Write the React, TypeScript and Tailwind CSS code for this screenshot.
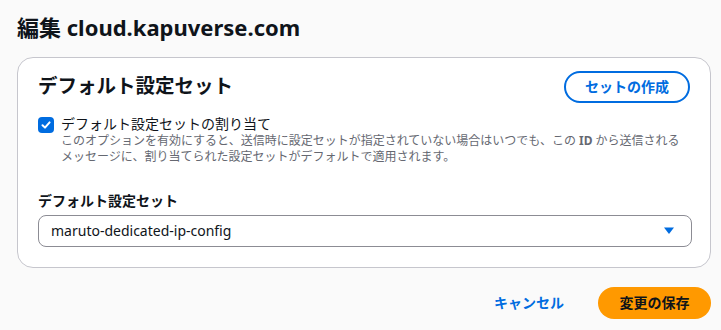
import React from "react";

export default function App() {
  const font = { fontFamily: '"Noto Sans", "Noto Sans CJK JP", sans-serif' };
  return (
    <div className="w-[721px] h-[330px] bg-[#fafafa] text-[#0f141a]" style={font}>
      <div className="pl-[17px] pr-[10px] pt-[12px]">
        <h1 className="text-[22px] leading-[30px] font-bold tracking-[0px]">編集 cloud.kapuverse.com</h1>
        <div className="mt-[15px] w-[694px] h-[211px] bg-white border border-[#c6c6cd] rounded-[16px] px-[20px] pt-[12px]">
          <div className="flex items-start justify-between">
            <h2 className="text-[19.5px] leading-[26px] font-bold mt-[3px]">デフォルト設定セット</h2>
            <button className="mt-[1px] h-[32px] px-[19px] rounded-full border-2 border-[#006ce0] text-[#006ce0] text-[14px] font-bold leading-[20px]">セットの作成</button>
          </div>
          <div className="flex items-start gap-[7px] mt-[11px]">
            <div className="mt-[3px] w-[16px] h-[16px] rounded-[4px] bg-[#006ce0] flex items-center justify-center shrink-0">
              <svg width="12" height="12" viewBox="0 0 12 12">
                <path d="M2.5 6.2 L5 8.6 L9.6 3.4" stroke="white" strokeWidth="2" fill="none" strokeLinecap="round" strokeLinejoin="round" />
              </svg>
            </div>
            <div>
              <div className="text-[14px] leading-[20px]">デフォルト設定セットの割り当て</div>
              <div className="text-[12px] leading-[16px] text-[#656871] mt-[-1px]">
                このオプションを有効にすると、送信時に設定セットが指定されていない場合はいつでも、この <span className="font-bold">ID</span> から送信される<br />
                メッセージに、割り当てられた設定セットがデフォルトで適用されます。
              </div>
            </div>
          </div>
          <div className="mt-[25px] text-[14px] leading-[22px] font-bold">デフォルト設定セット</div>
          <div className="mt-[3px] h-[32px] w-[654px] border border-[#8c8c94] rounded-[8px] flex items-center justify-between pl-[12px] pr-[16px]">
            <span className="text-[14px] leading-[20px]">maruto-dedicated-ip-config</span>
            <svg width="12" height="8" viewBox="0 0 12 8">
              <path d="M1 0.5 H11 L6 7 Z" fill="#006ce0" />
            </svg>
          </div>
        </div>
        <div className="flex justify-end items-center mt-[19px] pr-0 gap-[34px]">
          <button className="text-[#006ce0] text-[14px] font-bold leading-[20px]">キャンセル</button>
          <button className="h-[32px] w-[113px] rounded-full bg-[#ff9900] text-[#0f141a] text-[14px] font-bold leading-[20px]">変更の保存</button>
        </div>
      </div>
    </div>
  );
}
